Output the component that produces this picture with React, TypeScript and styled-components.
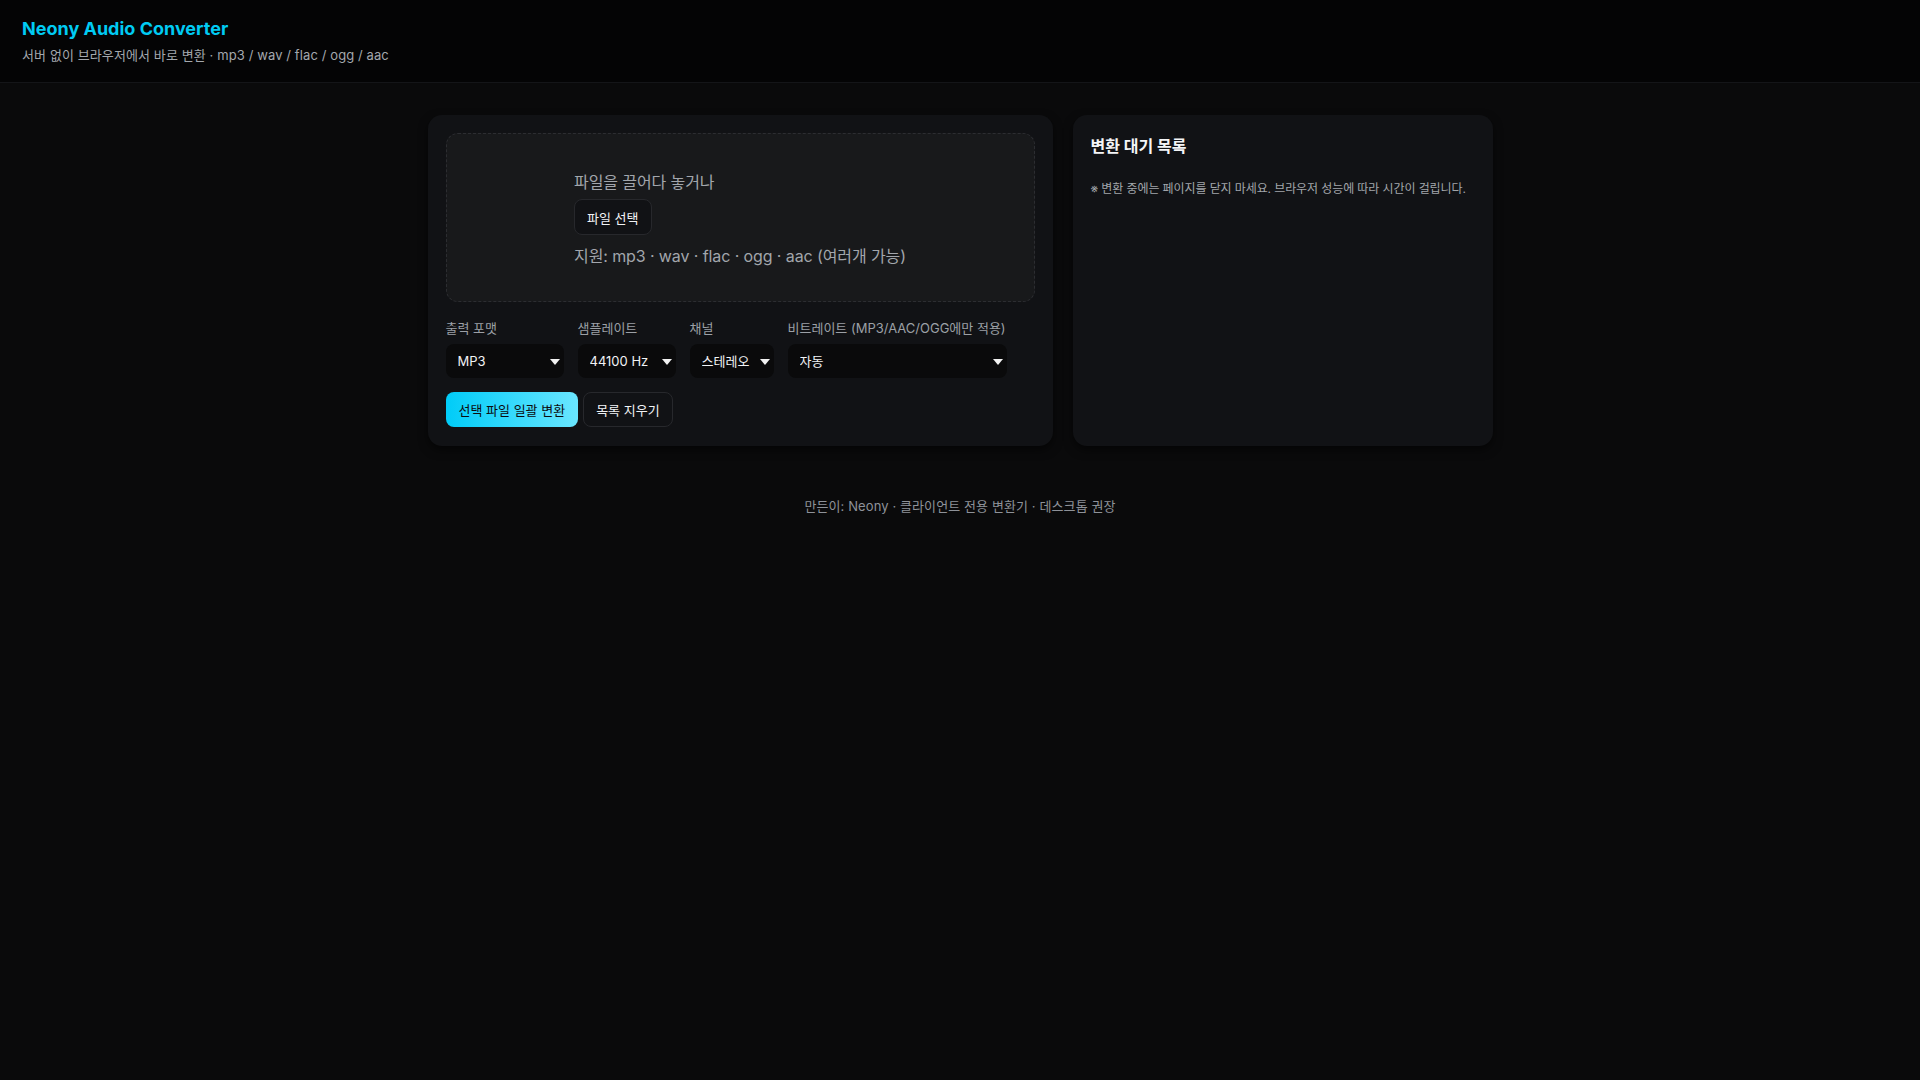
import { ReactNode } from 'react'
import styled, { createGlobalStyle } from 'styled-components'

const GlobalStyle = createGlobalStyle`
  html, body {
    margin: 0;
    padding: 0;
    background: #0a0a0b;
    color: #e8eaed;
    font-family: Inter, "Noto Sans CJK KR", "Noto Sans", sans-serif;
  }
  * { box-sizing: border-box; }
`

const Header = styled.header`
  padding: 17px 22px 17px;
  background: #040405;
  border-bottom: 1px solid #141518;
`

const Title = styled.h1`
  margin: 0;
  font-size: 18px;
  line-height: 24px;
  font-weight: 700;
  color: #00cbf3;
`

const Subtitle = styled.p`
  margin: 4px 0 0;
  font-size: 13px;
  line-height: 20px;
  color: #a3a7ad;
  letter-spacing: 0.1px;
`

const Main = styled.main`
  width: 1065px;
  margin: 32px auto 0;
  display: grid;
  grid-template-columns: 625px 1fr;
  gap: 20px;
`

const Card = styled.section`
  background: #111215;
  border-radius: 14px;
  padding: 18px 18px 19px;
  box-shadow: 0 4px 10px rgba(0, 0, 0, 0.55);
`

const DropZone = styled.div`
  border: 1px dashed #2c2d31;
  border-radius: 12px;
  background: #18191b;
  padding: 36px 20px 33px;
  display: flex;
  justify-content: center;
`

const DropInner = styled.div`
  display: flex;
  flex-direction: column;
  align-items: flex-start;
`

const DropText = styled.p`
  margin: 0;
  font-size: 16px;
  line-height: 24px;
  color: #a2a6ac;
  letter-spacing: -0.1px;
`

const GhostButton = styled.button<{ $h?: number }>`
  height: ${({ $h }) => $h ?? 36}px;
  padding: 0 12px;
  border: 1px solid #27282c;
  border-radius: 8px;
  background: #111215;
  color: #f1f3f5;
  font: inherit;
  font-size: 13px;
  font-weight: 400;
  cursor: pointer;
`

const PickButton = styled(GhostButton)`
  margin: 5px 0 9px;
`

const Controls = styled.div`
  display: flex;
  gap: 14px;
  margin-top: 17px;
`

const Field = styled.label<{ $w: number }>`
  display: flex;
  flex-direction: column;
  gap: 7px;
  width: ${({ $w }) => $w}px;
`

const FieldLabel = styled.span`
  font-size: 13px;
  line-height: 18px;
  color: #9ca0a6;
  white-space: nowrap;
`

const SelectWrap = styled.div`
  position: relative;

  &::after {
    content: '';
    position: absolute;
    right: 4px;
    top: 15px;
    border-left: 5px solid transparent;
    border-right: 5px solid transparent;
    border-top: 6px solid #f2f2f2;
    pointer-events: none;
  }
`

const Select = styled.select`
  appearance: none;
  width: 100%;
  height: 34px;
  padding: 0 22px 0 12px;
  border: none;
  border-radius: 8px;
  background: #0a0a0b;
  color: #f1f3f5;
  font: inherit;
  font-size: 13px;
  outline: none;
`

const Actions = styled.div`
  display: flex;
  gap: 5px;
  margin-top: 14px;
`

const PrimaryButton = styled.button`
  height: 35px;
  padding: 0 13px;
  border: none;
  border-radius: 8px;
  background: linear-gradient(90deg, #00ccf8 0%, #6ae6ff 100%);
  color: #0b0c0e;
  font: inherit;
  font-size: 13px;
  cursor: pointer;
`

const QueueTitle = styled.h2`
  margin: 0;
  font-size: 16px;
  line-height: 26px;
  font-weight: 700;
  color: #f4f5f7;
`

const Note = styled.p`
  margin: 21px 0 0;
  font-size: 12px;
  line-height: 18px;
  color: #a2a6ab;
  letter-spacing: -0.1px;
`

const Footer = styled.footer`
  margin-top: 50px;
  text-align: center;
  font-size: 13px;
  line-height: 20px;
  color: #8e9299;
  letter-spacing: 0.1px;
`

const SelectField = ({ label, width, children }: { label: string; width: number; children: ReactNode }) => (
  <Field $w={width}>
    <FieldLabel>{label}</FieldLabel>
    <SelectWrap>
      <Select>{children}</Select>
    </SelectWrap>
  </Field>
)

export default function App() {
  return (
    <>
      <GlobalStyle />
      <Header>
        <Title>Neony Audio Converter</Title>
        <Subtitle>서버 없이 브라우저에서 바로 변환 · mp3 / wav / flac / ogg / aac</Subtitle>
      </Header>
      <Main>
        <Card>
          <DropZone>
            <DropInner>
              <DropText>파일을 끌어다 놓거나</DropText>
              <PickButton>파일 선택</PickButton>
              <DropText>지원: mp3 · wav · flac · ogg · aac (여러개 가능)</DropText>
            </DropInner>
          </DropZone>
          <Controls>
            <SelectField label="출력 포맷" width={118}>
              <option>MP3</option>
              <option>WAV</option>
              <option>FLAC</option>
              <option>OGG</option>
              <option>AAC</option>
            </SelectField>
            <SelectField label="샘플레이트" width={98}>
              <option>44100 Hz</option>
              <option>48000 Hz</option>
            </SelectField>
            <SelectField label="채널" width={84}>
              <option>스테레오</option>
              <option>모노</option>
            </SelectField>
            <SelectField label="비트레이트 (MP3/AAC/OGG에만 적용)" width={219}>
              <option>자동</option>
              <option>128 kbps</option>
              <option>192 kbps</option>
              <option>320 kbps</option>
            </SelectField>
          </Controls>
          <Actions>
            <PrimaryButton>선택 파일 일괄 변환</PrimaryButton>
            <GhostButton $h={35}>목록 지우기</GhostButton>
          </Actions>
        </Card>
        <Card>
          <QueueTitle>변환 대기 목록</QueueTitle>
          <Note>※ 변환 중에는 페이지를 닫지 마세요. 브라우저 성능에 따라 시간이 걸립니다.</Note>
        </Card>
      </Main>
      <Footer>만든이: Neony · 클라이언트 전용 변환기 · 데스크톱 권장</Footer>
    </>
  )
}
